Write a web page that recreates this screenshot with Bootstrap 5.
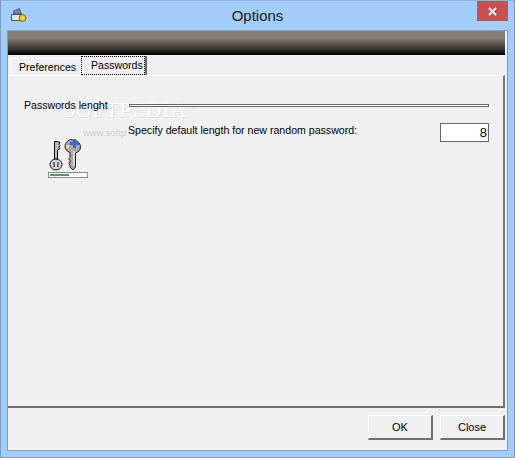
<!DOCTYPE html>
<html><head><meta charset="utf-8">
<link href="https://cdn.jsdelivr.net/npm/bootstrap@5.3.0/dist/css/bootstrap.min.css" rel="stylesheet">
<style>
html,body{margin:0;width:515px;height:458px;overflow:hidden;background:#a2ccf9}
body{font-family:"Liberation Sans",Arial,sans-serif;font-size:10.6px;color:#000}
.win{width:515px;height:458px;border:1px solid #7d9cc4;border-top-color:#8fb0d8;background:#a2ccf9}
.titlebar{height:29px;position:relative}
.wtitle{position:absolute;left:0;right:0;top:0;font-size:15px;line-height:30px;color:#1a1a1a;text-align:center}
.appicon{margin:7px 0 0 10px}
.closex{position:absolute;right:6px;top:0;width:31px;height:20px;background:#c75050}
.client{margin:0 6px;height:421px;background:#f0f0f0;border:1px solid #7d9cc4}
.banner{height:24px;background:linear-gradient(#8a8078 0,#857b72 30%,#4a4540 65%,#000 100%);margin-right:2px}
.tabrow{height:20px;padding:3px 0 0 2px;position:relative}
.wtab{height:17px;width:71px;padding-left:8px;line-height:17px;background:#f0f0f0;border-top:1px solid #fff;border-left:1px solid #fff;border-top-left-radius:2px}
.wtab.sel{margin-top:-2px;height:19px;width:66px;padding:0;border:0;border-right:2px solid #696969;background:none;border-radius:0}
.dots{border:1px dotted #000;padding-left:9px;line-height:17px;display:block;height:19px;width:64px}
.pane{height:333px;margin-right:2px;border-top:1px solid #fff;border-right:2px solid #777;border-bottom:2px solid #6e6e6e;position:relative;padding:0 14px 0 16px}
.grouphead{margin-top:22px;height:14px;line-height:14px;position:relative}
.gline{height:3px;margin-left:21px;border:1px solid #666;background:#fff}
.grow{margin-top:11px;position:relative}
.iconcol{width:40px;margin-left:24px;margin-right:40px;padding-top:15px}
.lblc{line-height:15px}
.numbox{width:49px;height:19px;border:1px solid #666;background:#fff;font-size:13px;line-height:17px;text-align:right;padding-right:1px}
.foot{height:42px;padding:7px 2px 0 0;gap:7px}
.wbtn{width:65px;height:25px;border:1px solid #fff;border-right:2px solid #6e6e6e;border-bottom:2px solid #6e6e6e;background:#f0f0f0;line-height:22px;text-align:center;font-size:11px}
.wmark{position:absolute;pointer-events:none;white-space:nowrap}
.wm1{left:55px;top:17px;font-family:"Liberation Serif",serif;font-size:22px;letter-spacing:.6px;color:#fbfbfb;text-shadow:1px 1px 0 #e0e0e0}
.wm1 sup{font-size:6px;top:-1.4em;color:#e0e0e0;text-shadow:none;font-family:"Liberation Sans",sans-serif}
.wm2{left:75px;top:50px;font-size:9.500px;color:#cfcfcf}
</style></head><body>
<div class="win">
 <div class="titlebar d-flex">
  <svg class="appicon" width="16" height="15" viewBox="0 0 16 15"><path d="M.5 6.500h11v6H.5z" fill="#e3e6ec" stroke="#555"/><path d="M2.500 3l6-2.500 2 5.500h-8z" fill="#6f87b5" stroke="#444" stroke-width=".7"/><circle cx="11.500" cy="10" r="3.500" fill="#f2c200" stroke="#8a6d00"/><circle cx="11.500" cy="10" r="1.200" fill="#fff3b0"/></svg>
  <div class="wtitle">Options</div>
  <div class="closex d-flex align-items-center justify-content-center"><svg width="9" height="9" viewBox="0 0 9 9"><path d="M1 1l7 7M8 1L1 8" stroke="#fff" stroke-width="1.8"/></svg></div>
 </div>
 <div class="client">
  <div class="banner"></div>
  <div class="tabrow d-flex">
   <div class="wtab">Preferences</div>
   <div class="wtab sel"><span class="dots">Passwords</span></div>
  </div>
  <div class="pane">
   <div class="wmark wm1">SOFTPEDIA<sup>TM</sup></div>
   <div class="wmark wm2">www.softp</div>
   <div class="grouphead d-flex align-items-center"><span>Passwords lenght</span><div class="gline flex-grow-1"></div></div>
   <div class="grow d-flex">
    <div class="iconcol">
     <svg width="40" height="40" viewBox="0 0 40 40" class="d-block"><g stroke="#111" stroke-width="1"><path d="M6.500 3.500h2.500l3 1-1 2 1 1-1 2 1 1-2.500 1.500v9h-3z" fill="#bdbdbd"/><ellipse cx="8" cy="26.500" rx="6" ry="5.500" fill="#d2d2d2"/><path d="M6 24v5M10 24v5" fill="none"/></g><path d="M24 2c5 0 8.500 3 8.500 7 0 3-2 5-5 6v14l-2.500 3-3-3v-2l-1.500-1.500 1.500-1.500v-1.500l-1.500-1.500 1.500-1.500v-5c-3-1-5-3-5-6 0-4 3.500-7 7-7z" fill="#a9a9a9" stroke="#222"/><path d="M25 13h2v15h-2z" fill="#d8d8d8"/><path d="M18 7h3v3h-3z" fill="#f5d98a"/><path d="M25 1h3v3h3v3h-3v3h-3V7h-3V4h3z" fill="#3a66d6"/><rect x=".5" y="34.500" width="39" height="5" fill="#fff" stroke="#8a8a8a"/><rect x="2" y="36" width="19" height="2" fill="#4c9a5c"/></svg>
    </div>
    <div class="lblc flex-grow-1">Specify default length for new random password:</div>
    <div class="numbox">8</div>
   </div>
  </div>
  <div class="foot d-flex justify-content-end"><div class="wbtn">OK</div><div class="wbtn">Close</div></div>
 </div>
</div>
</body></html>
